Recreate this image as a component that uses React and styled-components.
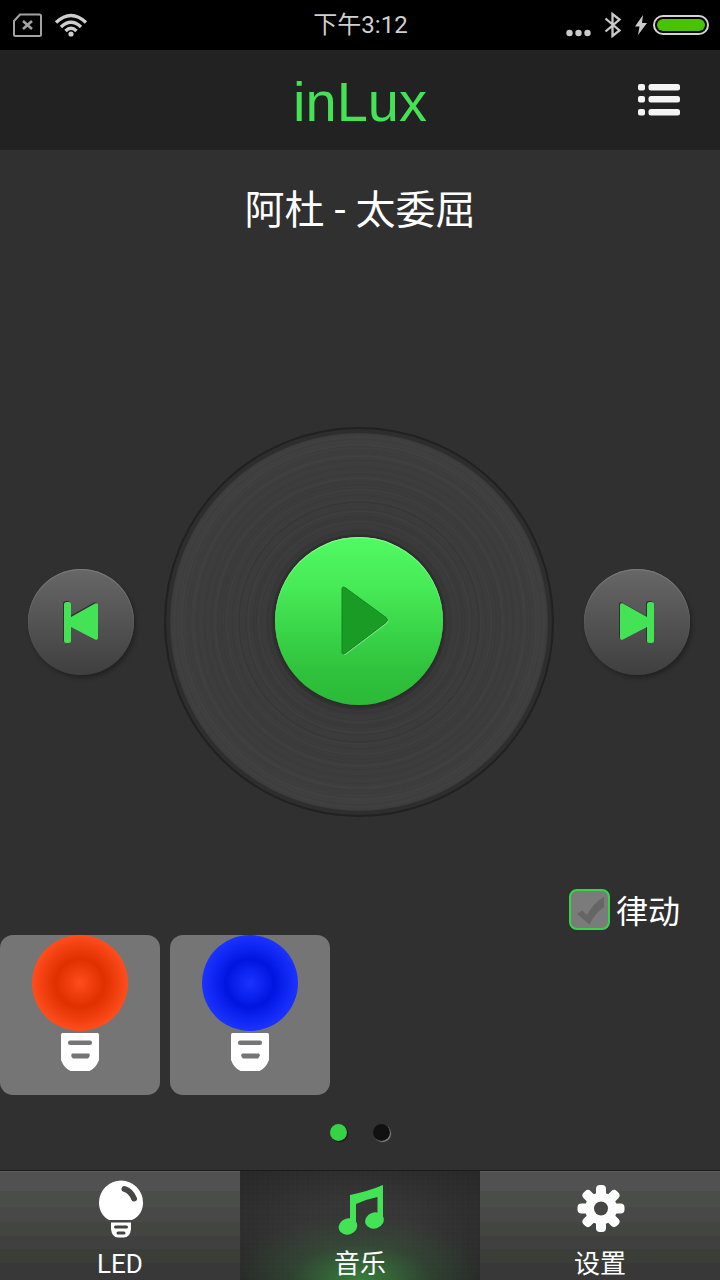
import React, { useState } from "react";
import styled, { createGlobalStyle, css } from "styled-components";

const GREEN = "#44e355";

const GlobalStyle = createGlobalStyle`
  *, *::before, *::after { box-sizing: border-box; }
  body {
    margin: 0;
    background: #303030;
    color: #fff;
    font-family: Roboto, "Noto Sans CJK SC", sans-serif;
  }
  button { border: 0; padding: 0; margin: 0; font: inherit; color: inherit; background: none; cursor: pointer; }
  svg { display: block; }
`;

const Screen = styled.div`
  min-height: 100vh;
  display: flex;
  flex-direction: column;
`;

const StatusBar = styled.div`
  height: 50px;
  padding: 0 11px 0 12px;
  display: grid;
  grid-template-columns: 1fr auto 1fr;
  align-items: center;
  background: #000;
  color: #d0d0d0;
`;

const StatusGroup = styled.div`
  display: flex;
  align-items: center;
  gap: ${(p) => p.$gap}px;
  justify-content: ${(p) => (p.$end ? "flex-end" : "flex-start")};
`;

const Clock = styled.time`
  font-size: 24px;
  line-height: 32px;
`;

const Header = styled.header`
  height: 100px;
  padding: 0 40px;
  display: grid;
  grid-template-columns: 1fr auto 1fr;
  align-items: center;
  background: #222;
`;

const Brand = styled.h1`
  grid-column: 2;
  margin: 0;
  padding-top: 4px;
  font-family: "Liberation Sans", sans-serif;
  font-size: 56px;
  font-weight: 400;
  line-height: 76px;
  color: ${GREEN};
`;

const MenuButton = styled.button`
  justify-self: end;
`;

const Main = styled.main`
  flex: 1;
  display: flex;
  flex-direction: column;
`;

const SongTitle = styled.h2`
  margin: 31px 0 113px;
  font-size: 40px;
  font-weight: 400;
  line-height: 60px;
  text-align: center;
`;

const Player = styled.section`
  flex: 1;
  padding: 0 30px 0 28px;
  display: flex;
  align-items: center;
  justify-content: space-between;
`;

const SkipButton = styled.button`
  width: 106px;
  height: 106px;
  border-radius: 50%;
  display: grid;
  place-items: center;
  background: linear-gradient(#676767, #3f3f3f);
  box-shadow: 2px 3px 4px rgba(0, 0, 0, 0.3), inset 0 1px 1px #7c7c7c;
`;

const Record = styled.div`
  width: 390px;
  height: 390px;
  border: 2px solid #212121;
  border-radius: 50%;
  padding: 4px;
  background: #2e2e2e;
`;

const Grooves = styled.div`
  height: 100%;
  padding-bottom: 2px;
  border-radius: 50%;
  display: grid;
  place-items: center;
  background:
    repeating-radial-gradient(circle, rgba(0, 0, 0, 0.045) 0 1px, transparent 2px 7px),
    repeating-radial-gradient(circle, rgba(255, 255, 255, 0.016) 0 1px, transparent 2px 11px),
    repeating-radial-gradient(circle, rgba(0, 0, 0, 0.04) 0 2px, transparent 4px 17px),
    radial-gradient(circle closest-side, #333 45%, #3b3b3b 50%, #3d3d3d 85%, #404040 98%, #3a3a3a 100%);
`;

const PlayButton = styled.button`
  width: 168px;
  height: 168px;
  border-radius: 50%;
  display: grid;
  place-items: center;
  background: linear-gradient(#50fa62, #47ea57 30%, #2fc23c 80%, #2cb938);
  box-shadow: 0 0 3px #222, inset 0 1px 1px #8dfa98;
`;

const RhythmRow = styled.div`
  padding: 0 40px 0 0;
  display: flex;
  justify-content: flex-end;
`;

const RhythmLabel = styled.label`
  height: 40px;
  display: flex;
  align-items: center;
  gap: 6px;
  font-size: 32px;
  line-height: 40px;
`;

const RhythmText = styled.span`
  padding-top: 6px;
`;

const CheckWrap = styled.span`
  display: grid;
  > * { grid-area: 1 / 1; }
  svg { pointer-events: none; }
`;

const Checkbox = styled.input`
  appearance: none;
  width: 41px;
  height: 41px;
  margin: 0;
  border: 2px solid #37d447;
  border-radius: 8px;
  background: #7b7b7b;
`;

const Lamps = styled.div`
  margin-top: 6px;
  display: flex;
  gap: 10px;
`;

const LampCard = styled.button`
  width: 160px;
  height: 160px;
  border-radius: 13px;
  display: flex;
  flex-direction: column;
  align-items: center;
  gap: 2px;
  background: #757575;
`;

const Globe = styled.span`
  width: 96px;
  height: 96px;
  border-radius: 50%;
  background: radial-gradient(circle closest-side, ${(p) => p.$light}, ${(p) => p.$dark} 50%, ${(p) => p.$light});
`;

const Pager = styled.div`
  height: 75px;
  display: flex;
  align-items: center;
  justify-content: center;
  gap: 26px;
`;

const PageDot = styled.button`
  width: 17px;
  height: 17px;
  border-radius: 50%;
  ${(p) =>
    p.$active
      ? css`background: #37d346; box-shadow: 1px 1px 1px #151515;`
      : css`background: #111; box-shadow: 1px 1px 1px #8a8a8a;`}
`;

const TabBar = styled.nav`
  height: 110px;
  border-top: 1px solid #1a1a1a;
  display: grid;
  grid-template-columns: repeat(3, 1fr);
`;

const weave = css`
  background:
    radial-gradient(130px 64px at 50% 100%, rgba(56, 135, 62, 0.9), rgba(52, 100, 55, 0.35) 55%, transparent),
    repeating-linear-gradient(90deg, rgba(255, 255, 255, 0.008) 0 1px, transparent 1px 5px),
    repeating-linear-gradient(rgba(255, 255, 255, 0.008) 0 1px, transparent 1px 5px),
    radial-gradient(ellipse at 50% 50%, #363636 30%, #272727 100%);
`;

const bands = css`
  background: linear-gradient(
    #5d5d5d 0 1px, #515151 1px 20px, #4b4d49 20px 36px, #484848 36px 51px,
    #434541 51px 65px, #404040 65px 78px, #3b3d39 78px 92px, #383838 92px
  );
`;

const Tab = styled.a`
  display: flex;
  flex-direction: column;
  align-items: center;
  gap: 9px;
  padding-top: 8px;
  color: #fff;
  font-size: 26px;
  line-height: 32px;
  text-decoration: none;
  ${(p) => (p.$active ? weave : bands)}
`;

function SimIcon() {
  return (
    <svg width="30" height="24" viewBox="0 0 30 24" fill="none" stroke="#a3a3a3" strokeWidth="2">
      <path d="M8 1.500H27.500a1.500 1.500 0 0 1 1.500 1.500V21.500a1.500 1.500 0 0 1-1.500 1.500H3.500A1.500 1.500 0 0 1 2 21.500V8Z" />
      <path d="M11 8l9 8M20 8l-9 8" strokeWidth="2.600" />
    </svg>
  );
}

function WifiIcon() {
  return (
    <svg width="34" height="24" viewBox="0 0 34 24" fill="none" stroke="#cfcfcf" strokeWidth="3.400">
      <path d="M2 9.500Q17-4.500 32 9.500" />
      <path d="M7 14Q17 4.500 27 14" />
      <path d="M11.500 18Q17 12.500 22.500 18" />
      <circle cx="17" cy="21" r="2.600" fill="#cfcfcf" stroke="none" />
    </svg>
  );
}

function SignalIcon() {
  return (
    <svg width="25" height="26" viewBox="0 0 25 26" fill="#cacaca">
      <circle cx="3.500" cy="21" r="3.200" />
      <circle cx="12.500" cy="21" r="3.200" />
      <circle cx="21.500" cy="21" r="3.200" />
    </svg>
  );
}

function BluetoothIcon() {
  return (
    <svg width="18" height="26" viewBox="0 0 18 26" fill="none" stroke="#cacaca" strokeWidth="2.300">
      <path d="M1.500 6.500L15.500 18.500L8.500 24V2L15.500 7.500L1.500 19.500" />
    </svg>
  );
}

function BoltIcon() {
  return (
    <svg width="12" height="20" viewBox="0 0 12 20" fill="#cacaca">
      <path d="M8 0L0 11.500H4.500L3 20L12 8H7Z" />
    </svg>
  );
}

function BatteryIcon() {
  return (
    <svg width="56" height="20" viewBox="0 0 56 20">
      <rect x="1" y="1" width="54" height="18" rx="9" fill="none" stroke="#d4d4d4" strokeWidth="2" />
      <rect x="4" y="4" width="48" height="12" rx="6" fill="#47c300" />
    </svg>
  );
}

function ListIcon() {
  return (
    <svg width="42" height="34" viewBox="0 0 42 34" fill="#f4f4f4">
      {[1, 13, 26].map((y) => (
        <g key={y}>
          <rect x="0" y={y} width="7" height="6.500" rx="2" />
          <rect x="10.500" y={y} width="31.500" height="6.500" rx="2.500" />
        </g>
      ))}
    </svg>
  );
}

function SkipIcon({ forward }) {
  const shape = (
    <>
      <rect x="1" y="2" width="7" height="41" rx="2.500" />
      <path d="M8 17L32 3.500Q35 2.500 35 5V38Q35 40.500 32 39.500L8 27Z" />
    </>
  );
  return (
    <svg width="36" height="44" viewBox="0 0 36 44">
      <g fill="#303030" transform={forward ? "matrix(-1 0 0 1 35 -1)" : "translate(-1 -1)"}>{shape}</g>
      <g fill={GREEN} transform={forward ? "matrix(-1 0 0 1 36 0)" : undefined}>{shape}</g>
    </svg>
  );
}

function PlayIcon() {
  return (
    <svg width="60" height="70" viewBox="-12 0 60 70">
      <path transform="translate(1 1)" fill="#7de286" d="M1 3.500Q1 0 4 1.500L45 31.500Q48 34 45 36.500L4 67.500Q1 69 1 66Z" />
      <path fill="#199b25" stroke="#178421" strokeWidth="1" d="M1 3.500Q1 0 4 1.500L45 31.500Q48 34 45 36.500L4 67.500Q1 69 1 66Z" />
    </svg>
  );
}

function TickIcon() {
  return (
    <svg width="41" height="41" viewBox="0 0 41 41">
      <path d="M8 25L13 21.500L18 26Q25 13 35 8V18Q26 24 20.500 35.500Z" fill="#656565" />
    </svg>
  );
}

function LampBase() {
  return (
    <svg width="38" height="38" viewBox="0 0 38 38">
      <path fill="#fff" d="M1.500 0H36.500Q38 0 38 1.500V27Q35 35 28.500 38H9.500Q3 35 0 27V1.500Q0 0 1.500 0Z" />
      <rect x="7" y="7.500" width="24" height="4.500" rx="2" fill="#757575" />
      <path d="M11 20.500H28Q30 22.500 27 25.500H12Q9 23 11 20.500Z" fill="#757575" />
    </svg>
  );
}

function BulbIcon() {
  return (
    <svg width="50" height="60" viewBox="0 -1 50 60">
      <path fill="#fff" d="M14 40C7 36 4 30 4 22.500a22 22 0 0 1 44 0C48 30 45 36 37 40Z" />
      <path d="M29.500 9Q36 11 39 18.500" fill="none" stroke="#474845" strokeWidth="6" strokeLinecap="round" />
      <path fill="#fff" d="M16 42.500H36V49Q35 57.500 29 57.500H23Q17 57.500 16 49Z" />
      <path d="M20.500 47H31.500M23 53H29" stroke="#41433f" strokeWidth="3" strokeLinecap="round" />
    </svg>
  );
}

function MusicIcon() {
  return (
    <svg width="50" height="60" viewBox="0 0 50 60" fill={GREEN}>
      <path d="M15 16Q34 12 48 6V41H42.500V18Q32 20 21 25V48H15Z" />
      <ellipse cx="13" cy="47.500" rx="9.500" ry="8" transform="rotate(-20 13 47.500)" />
      <ellipse cx="39.500" cy="41.500" rx="9.500" ry="8" transform="rotate(-20 39.500 41.500)" />
    </svg>
  );
}

function GearIcon() {
  return (
    <svg width="50" height="60" viewBox="0 0 50 60">
      <g fill="#fff">
        {[0, 45, 90, 135].map((a) => (
          <rect key={a} x="21" y="6" width="10" height="47" rx="4" transform={`rotate(${a} 26 29.500)`} />
        ))}
        <circle cx="26" cy="29.500" r="16" />
      </g>
      <circle cx="26" cy="29.500" r="7" fill="#464745" />
    </svg>
  );
}

const lamps = [
  { name: "红灯", light: "#ff4d1d", dark: "#e03000" },
  { name: "蓝灯", light: "#1c33ff", dark: "#0015e0" },
];

const tabs = [
  { id: "led", label: "LED", Icon: BulbIcon },
  { id: "music", label: "音乐", Icon: MusicIcon },
  { id: "settings", label: "设置", Icon: GearIcon },
];

export default function App() {
  const [rhythm, setRhythm] = useState(false);
  const [page, setPage] = useState(0);
  const [tab, setTab] = useState("music");

  return (
    <>
      <GlobalStyle />
      <Screen>
        <StatusBar>
          <StatusGroup $gap={12}>
            <SimIcon />
            <WifiIcon />
          </StatusGroup>
          <Clock>下午3:12</Clock>
          <StatusGroup $end $gap={6}>
            <StatusGroup $gap={13}>
              <SignalIcon />
              <BluetoothIcon />
              <BoltIcon />
            </StatusGroup>
            <BatteryIcon />
          </StatusGroup>
        </StatusBar>
        <Header>
          <Brand>inLux</Brand>
          <MenuButton type="button" aria-label="播放列表">
            <ListIcon />
          </MenuButton>
        </Header>
        <Main>
          <SongTitle>阿杜 - 太委屈</SongTitle>
          <Player>
            <SkipButton type="button" aria-label="上一首">
              <SkipIcon />
            </SkipButton>
            <Record>
              <Grooves>
                <PlayButton type="button" aria-label="播放">
                  <PlayIcon />
                </PlayButton>
              </Grooves>
            </Record>
            <SkipButton type="button" aria-label="下一首">
              <SkipIcon forward />
            </SkipButton>
          </Player>
          <RhythmRow>
            <RhythmLabel>
              <CheckWrap>
                <Checkbox type="checkbox" checked={rhythm} onChange={(e) => setRhythm(e.target.checked)} />
                <TickIcon />
              </CheckWrap>
              <RhythmText>律动</RhythmText>
            </RhythmLabel>
          </RhythmRow>
          <Lamps>
            {lamps.map((l) => (
              <LampCard key={l.name} type="button" aria-label={l.name}>
                <Globe $light={l.light} $dark={l.dark} />
                <LampBase />
              </LampCard>
            ))}
          </Lamps>
          <Pager>
            {[0, 1].map((n) => (
              <PageDot key={n} type="button" aria-label={`第${n + 1}页`} $active={page === n} onClick={() => setPage(n)} />
            ))}
          </Pager>
        </Main>
        <TabBar>
          {tabs.map(({ id, label, Icon }) => (
            <Tab key={id} href={`#${id}`} $active={tab === id} onClick={() => setTab(id)}>
              <Icon />
              {label}
            </Tab>
          ))}
        </TabBar>
      </Screen>
    </>
  );
}
